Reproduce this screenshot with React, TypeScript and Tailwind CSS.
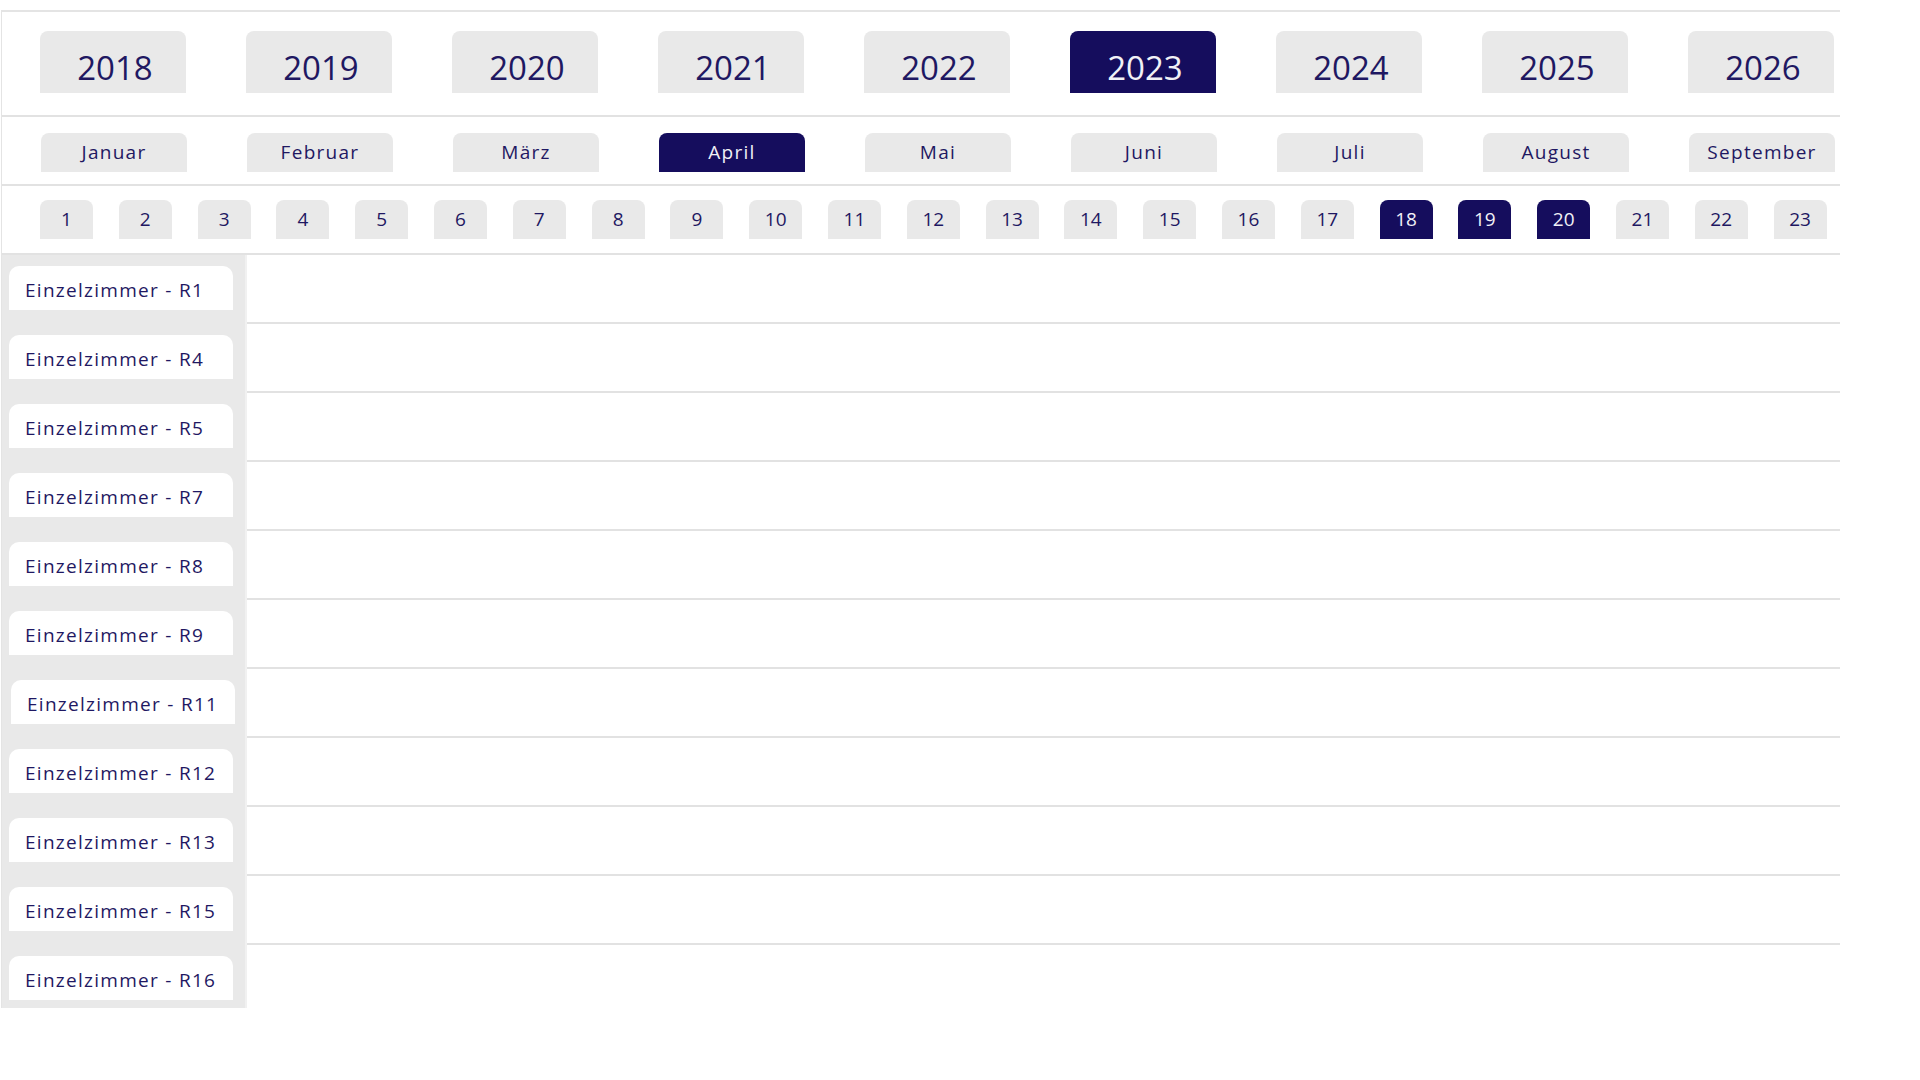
import React from "react"

const years = [2018, 2019, 2020, 2021, 2022, 2023, 2024, 2025, 2026]
const months = ["Januar", "Februar", "März", "April", "Mai", "Juni", "Juli", "August", "September"]
const days = Array.from({ length: 23 }, (_, i) => i + 1)
const rooms = ["R1", "R4", "R5", "R7", "R8", "R9", "R11", "R12", "R13", "R15", "R16"]

const activeYear = 2023
const activeMonth = "April"
const activeDays = [18, 19, 20]

function Tab({ active, className, children }: { active: boolean; className: string; children: React.ReactNode }) {
  return (
    <div
      className={`flex shrink-0 items-center justify-center rounded-t-lg ${className} ${
        active ? "bg-[#150d5d] text-[#f1f1f6]" : "bg-[#e9e9e9]"
      }`}
    >
      {children}
    </div>
  )
}

export default function App() {
  return (
    <div className="min-h-screen bg-white pt-[10px] font-['Open_Sans','Noto_Sans',sans-serif] tracking-[0.08em] text-[#1f1862]">
      <div className="ml-px w-[1839px] border-t-2 border-l border-[#e4e4e4]">
        {/* years */}
        <div className="flex gap-[60px] border-b-2 border-[#e2e2e2] pt-[19px] pb-[22px] pl-[38px]">
          {years.map((y) => (
            <Tab key={y} active={y === activeYear} className="h-[62px] w-[146px] pt-3 pl-1 text-[33px] tracking-normal">
              {y}
            </Tab>
          ))}
        </div>

        {/* months */}
        <div className="flex gap-[60px] border-b-2 border-[#e2e2e2] pt-[16px] pb-[12px] pl-[39px]">
          {months.map((m) => (
            <Tab key={m} active={m === activeMonth} className="h-[39px] w-[146px] text-[19px]">
              {m}
            </Tab>
          ))}
        </div>

        {/* days */}
        <div className="flex gap-[25.8px] border-b-2 border-[#e2e2e2] pt-[14px] pb-[14px] pl-[38px]">
          {days.map((d) => (
            <Tab key={d} active={activeDays.includes(d)} className="h-[39px] w-[53px] text-[19px] tracking-normal">
              {d}
            </Tab>
          ))}
        </div>

        {/* rooms + timeline */}
        <div className="flex">
          <div className="flex w-[245px] shrink-0 flex-col gap-[25px] border-r-2 border-[#f1f1f1] bg-[#e9e9e9] pt-[11px] pb-[8px] pl-[7px]">
            {rooms.map((r) => (
              <div
                key={r}
                className={`flex h-[44px] w-[224px] items-center rounded-t-[10px] bg-white pt-1 pl-4 text-[19px] ${
                  r === "R11" ? "ml-[2px]" : ""
                }`}
              >
                Einzelzimmer - {r}
              </div>
            ))}
          </div>
          <div className="flex-1">
            {rooms.slice(0, -1).map((r) => (
              <div key={r} className="h-[69px] border-b-2 border-[#e2e2e2]" />
            ))}
          </div>
        </div>
      </div>
    </div>
  )
}
